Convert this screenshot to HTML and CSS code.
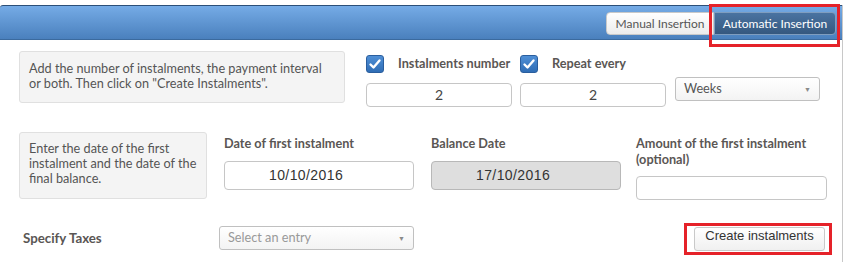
FILE: index.html
```html
<!DOCTYPE html>
<html lang="en">
<head>
  <meta charset="UTF-8">
  <title>Instalments</title>
  <link rel="stylesheet" href="styles.css">
</head>
<body>
<div class="panel">
  <div class="header">
    <div class="tabs">
      <span class="tab">Manual Insertion</span>
      <span class="tab active">Automatic Insertion</span>
    </div>
    <span class="mark mark-tab"></span>
  </div>

  <div class="body">
    <div class="row row-one">
      <div class="note note-wide">Add the number of instalments, the payment interval or both. Then click on "Create Instalments".</div>
      <div class="field f-num">
        <div class="check-line">
          <span class="check"><svg width="18" height="18" viewBox="0 0 18 18"><path d="M4.5 9.5l3 3 6-7" fill="none" stroke="#fff" stroke-width="2.4" stroke-linecap="round" stroke-linejoin="round"/></svg></span>
          <span class="label">Instalments number</span>
        </div>
        <div class="input center">2</div>
      </div>
      <div class="field f-rep">
        <div class="check-line">
          <span class="check"><svg width="18" height="18" viewBox="0 0 18 18"><path d="M4.5 9.5l3 3 6-7" fill="none" stroke="#fff" stroke-width="2.4" stroke-linecap="round" stroke-linejoin="round"/></svg></span>
          <span class="label">Repeat every</span>
        </div>
        <div class="input center">2</div>
      </div>
      <div class="select s-weeks"><span>Weeks</span><span class="arrow">&#9660;</span></div>
    </div>

    <div class="row row-two">
      <div class="note note-narrow">Enter the date of the first instalment and the date of the final balance.</div>
      <div class="field f-date">
        <div class="label">Date of first instalment</div>
        <div class="input date">10/10/2016</div>
      </div>
      <div class="field f-bal">
        <div class="label">Balance Date</div>
        <div class="input date disabled">17/10/2016</div>
      </div>
      <div class="field f-amt">
        <div class="label">Amount of the first instalment (optional)</div>
        <div class="input small"></div>
      </div>
    </div>

    <div class="row row-three">
      <div class="label taxes">Specify Taxes</div>
      <div class="select s-tax"><span class="ph">Select an entry</span><span class="arrow">&#9660;</span></div>
      <div class="btn-wrap">
        <span class="button">Create instalments</span>
        <span class="mark mark-btn"></span>
      </div>
    </div>
  </div>
</div>
</body>
</html>
```

FILE: styles.css
```css
* {
  box-sizing: border-box;
}

body {
  margin: 0;
  background: #fff;
  font: normal 12.7px "Lato", "Liberation Sans", sans-serif;
  color: #555;
}

.panel {
  margin-top: 5px;
  width: 843px;
  height: 270px;
  border-right: 1px solid #c8c8c8;
}

/* blue bar */
.header {
  position: relative;
  height: 35px;
  border-top: 1px solid #2c4f78;
  border-bottom: 1px solid #3b6a9e;
  border-top-left-radius: 3px;
  background: linear-gradient(#75abe6, #4a80bd);
  display: flex;
  justify-content: flex-end;
  padding: 6px 6px 0 0;
}

.tabs {
  display: flex;
  height: 23px;
}

.tab {
  height: 23px;
  line-height: 21px;
  font-size: 12px;
  white-space: nowrap;
  color: #555;
  background: linear-gradient(#fff, #ececec);
  border: 1px solid #c9c9c9;
  border-radius: 4px 0 0 4px;
  width: 108px;
  text-align: center;
}

.tab.active {
  width: 122px;
  color: #fff;
  background: linear-gradient(#4a73a1, #35587f);
  border: 1px solid #7f9dbf;
  border-radius: 0 4px 4px 0;
}

.mark {
  position: absolute;
  border: 3px solid #e52229;
}

.mark-tab {
  right: 2px;
  top: -2px;
  width: 131px;
  height: 43px;
}

.body {
  padding: 11px 0 0 19px;
}

.row {
  display: flex;
  align-items: flex-start;
}

.note {
  background: #f4f4f4;
  border: 1px solid #e0e0e0;
  border-radius: 3px;
  color: #555;
  line-height: 15px;
}

.note-wide {
  width: 326px;
  height: 52px;
  padding: 9px 9px;
}

.note-narrow {
  width: 188px;
  height: 67px;
  padding: 8px 5px 9px 9px;
}

.label {
  font-weight: bold;
  color: #5a5654;
  line-height: 16px;
  white-space: nowrap;
}

.check-line {
  display: flex;
  align-items: center;
  height: 18px;
  margin-top: 4px;
}

.check {
  width: 18px;
  height: 18px;
  border-radius: 3px;
  background: linear-gradient(#4f8fd6, #2f6db5);
  border: 1px solid #2a5e9e;
  display: flex;
}

.check svg {
  margin: -1px;
}

.check-line .label {
  margin-left: 14px;
  margin-top: -3px;
}

.input {
  height: 24px;
  border: 1px solid #c6c6c6;
  border-radius: 4px;
  background: #fff;
  color: #444;
  line-height: 22px;
}

.input.center {
  text-align: center;
  font-size: 14px;
}

.f-num {
  width: 146px;
  margin-left: 21px;
}

.f-rep {
  width: 146px;
  margin-left: 8px;
}

.f-num .input,
.f-rep .input {
  margin-top: 10px;
}

.select {
  display: flex;
  justify-content: space-between;
  height: 24px;
  border: 1px solid #c0c0c0;
  border-radius: 3px;
  background: linear-gradient(#fff, #f3f3f3);
  padding: 0 8px;
  line-height: 20px;
  color: #555;
}

.arrow {
  font-size: 7px;
  color: #8a8a8a;
  line-height: 22px;
}

.s-weeks {
  width: 145px;
  margin: 26px 0 0 9px;
}

.row-two {
  margin-top: 25px;
}

.f-date,
.f-bal,
.f-amt {
  width: 190px;
  margin-left: 17px;
  padding-top: 3px;
}

.f-amt {
  width: 191px;
  margin-left: 15px;
}

.f-amt .label {
  white-space: normal;
}

.input.date {
  margin-top: 10px;
  height: 29px;
  font: 14px "Liberation Sans", Arial, sans-serif;
  letter-spacing: 0.4px;
  color: #333;
  padding-left: 44px;
  line-height: 27px;
}

.input.disabled {
  background: #dedede;
  border-color: #b8b8b8;
}

.input.small {
  margin-top: 9px;
}

.row-three {
  margin-top: 26px;
  align-items: center;
  height: 24px;
}

.taxes {
  width: 200px;
  margin-left: 4px;
  font-size: 13.3px;
}

.s-tax {
  width: 195px;
  margin-left: -4px;
}

.ph {
  color: #999;
}

.btn-wrap {
  position: relative;
  margin-left: 280px;
  margin-top: 2px;
}

.button {
  display: block;
  width: 131px;
  height: 24px;
  border: 1px solid #c9c9c9;
  border-radius: 3px;
  background: linear-gradient(#fff, #f0f0f0);
  text-align: center;
  line-height: 22px;
  font: 13px "Liberation Sans", Arial, sans-serif;
  color: #333;
}

.mark-btn {
  left: -10px;
  top: -4px;
  width: 148px;
  height: 32px;
}
```
